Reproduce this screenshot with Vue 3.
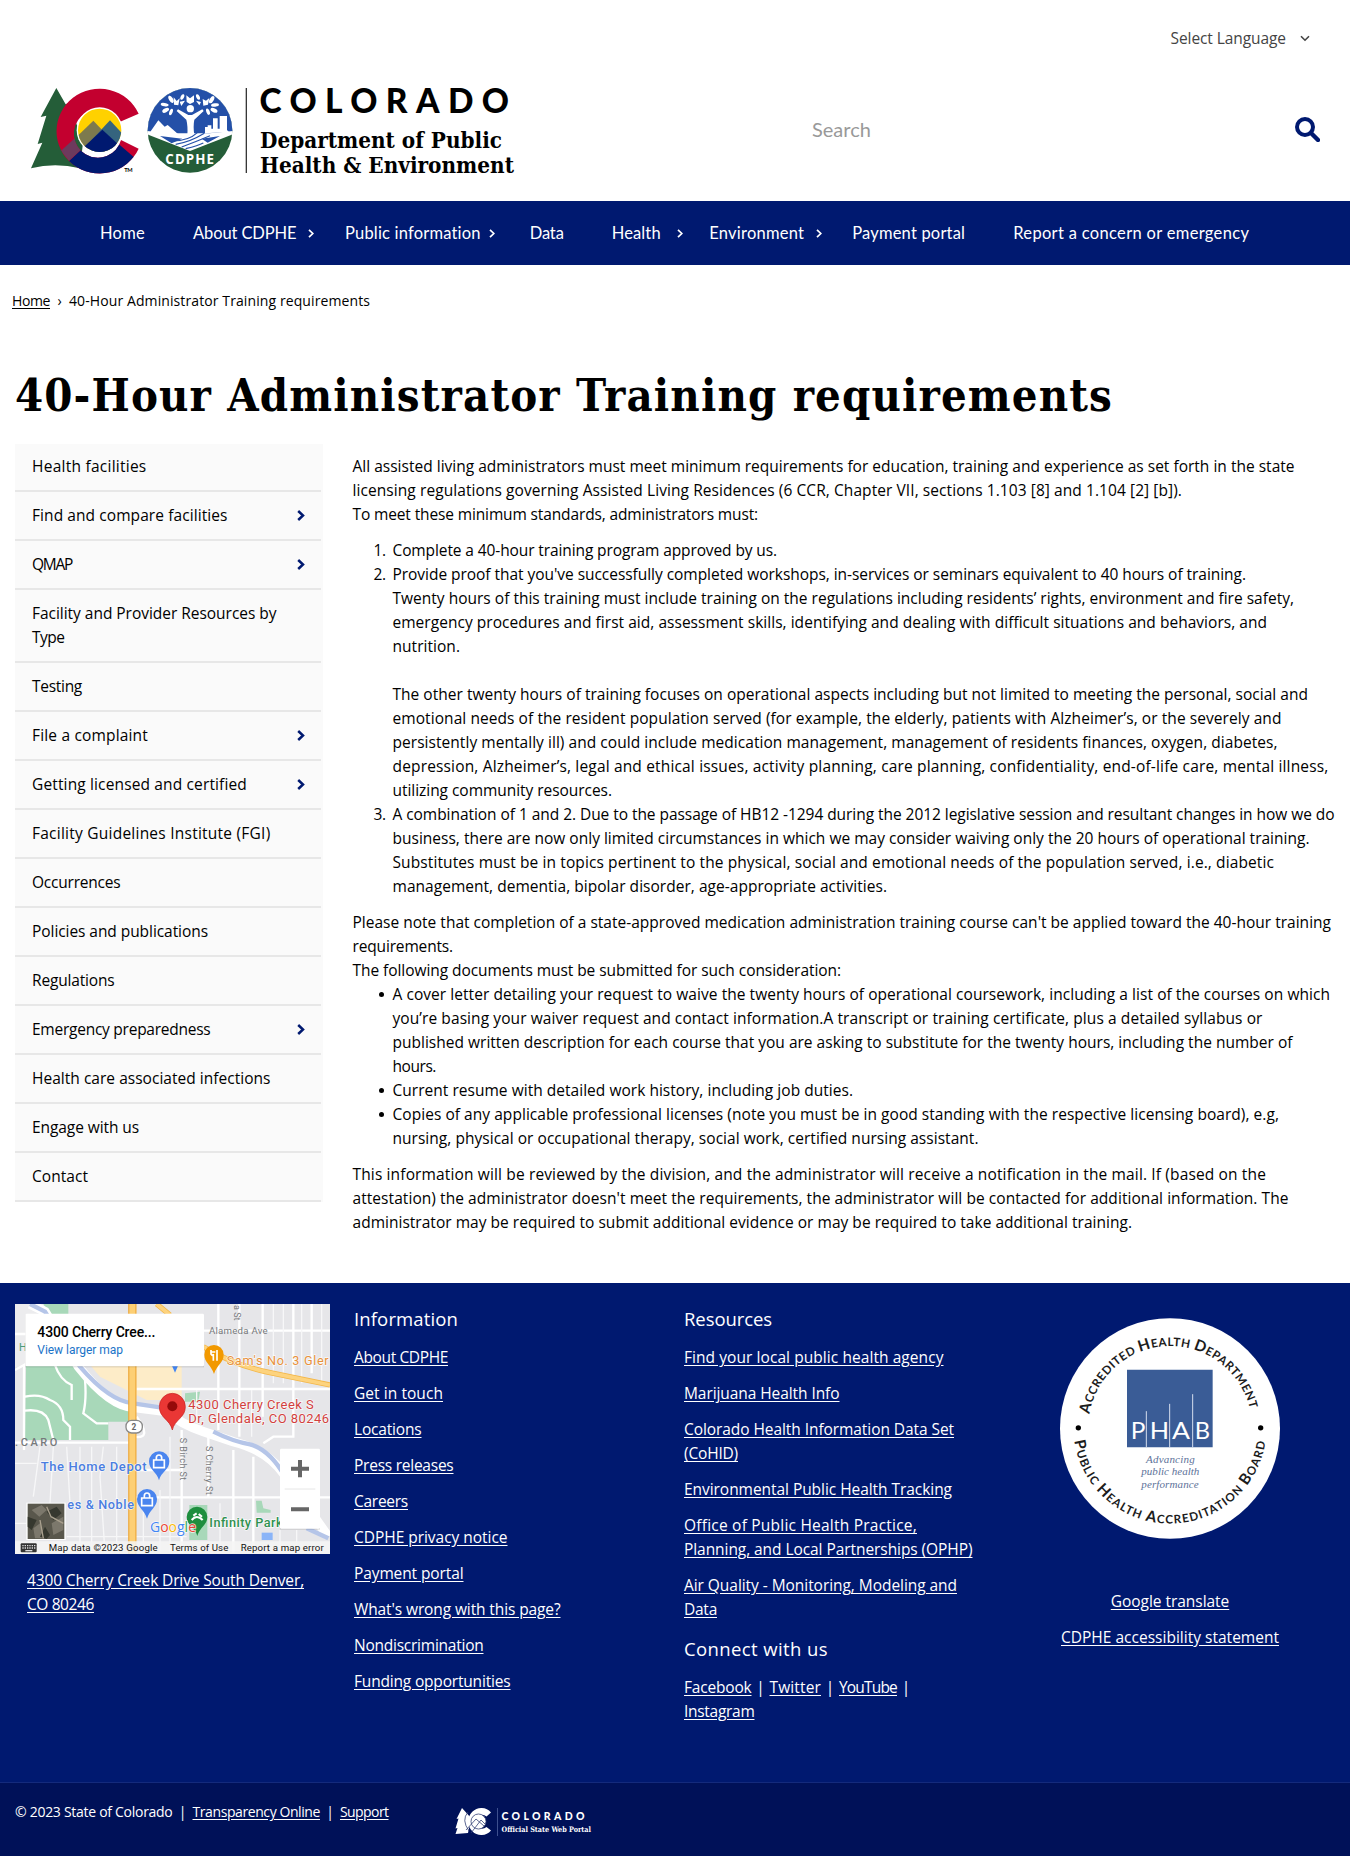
<script setup>
// Stretches or tightens a text run to a set width through its letter spacing.
const vFit = {
  mounted(el, { value }) {
    const gap = (value - el.getBoundingClientRect().width) / el.textContent.length
    el.style.letterSpacing = gap.toFixed(4) + 'px'
  }
}

const nav = [
  { text: 'Home', w: 45, gap: 48 },
  { text: 'About CDPHE', w: 103.5, arrow: 11, gap: 31.5 },
  { text: 'Public information', w: 136, arrow: 8.5, gap: 34.5 },
  { text: 'Data', w: 34, gap: 48 },
  { text: 'Health', w: 49, arrow: 16.5, gap: 26 },
  { text: 'Environment', w: 95, arrow: 12, gap: 30 },
  { text: 'Payment portal', w: 113, gap: 48 },
  { text: 'Report a concern or emergency', w: 236, gap: 0 }
]

const side = [
  { lines: [['Health facilities', 114.5]] },
  { lines: [['Find and compare facilities', 195.5]], arrow: true },
  { lines: [['QMAP', 40]], arrow: true },
  { lines: [['Facility and Provider Resources by', 244.5], ['Type', 32.5]] },
  { lines: [['Testing', 50]] },
  { lines: [['File a complaint', 116]], arrow: true },
  { lines: [['Getting licensed and certified', 215]], arrow: true },
  { lines: [['Facility Guidelines Institute (FGI)', 238.5]] },
  { lines: [['Occurrences', 88.5]] },
  { lines: [['Policies and publications', 176]] },
  { lines: [['Regulations', 82.5]] },
  { lines: [['Emergency preparedness', 178.5]], arrow: true },
  { lines: [['Health care associated infections', 238.5]] },
  { lines: [['Engage with us', 107]] },
  { lines: [['Contact', 56]] }
]

const intro = [
  ['All assisted living administrators must meet minimum requirements for education, training and experience as set forth in the state', 942],
  ['licensing regulations governing Assisted Living Residences (6 CCR, Chapter VII, sections 1.103 [8] and 1.104 [2] [b]).', 829.5],
  ['To meet these minimum standards, administrators must:', 405.5]
]

const steps = [
  [['Complete a 40-hour training program approved by us.', 384.5]],
  [
    ["Provide proof that you've successfully completed workshops, in-services or seminars equivalent to 40 hours of training.", 853.5],
    ['Twenty hours of this training must include training on the regulations including residents’ rights, environment and fire safety,', 901.5],
    ['emergency procedures and first aid, assessment skills, identifying and dealing with difficult situations and behaviors, and', 874.5],
    ['nutrition.', 67.5],
    null,
    ['The other twenty hours of training focuses on operational aspects including but not limited to meeting the personal, social and', 915.5],
    ['emotional needs of the resident population served (for example, the elderly, patients with Alzheimer’s, or the severely and', 889],
    ['persistently mentally ill) and could include medication management, management of residents finances, oxygen, diabetes,', 885],
    ['depression, Alzheimer’s, legal and ethical issues, activity planning, care planning, confidentiality, end-of-life care, mental illness,', 936],
    ['utilizing community resources.', 219.5]
  ],
  [
    ['A combination of 1 and 2. Due to the passage of HB12 -1294 during the 2012 legislative session and resultant changes in how we do', 942],
    ['business, there are now only limited circumstances in which we may consider waiving only the 20 hours of operational training.', 917],
    ['Substitutes must be in topics pertinent to the physical, social and emotional needs of the population served, i.e., diabetic', 881.5],
    ['management, dementia, bipolar disorder, age-appropriate activities.', 494.5]
  ]
]

const note = [
  ["Please note that completion of a state-approved medication administration training course can't be applied toward the 40-hour training", 978.5],
  ['requirements.', 100.5],
  ['The following documents must be submitted for such consideration:', 488.5]
]

const docs = [
  [
    ['A cover letter detailing your request to waive the twenty hours of operational coursework, including a list of the courses on which', 937.5],
    ['you’re basing your waiver request and contact information.A transcript or training certificate, plus a detailed syllabus or', 870],
    ['published written description for each course that you are asking to substitute for the twenty hours, including the number of', 900],
    ['hours.', 43.5]
  ],
  [['Current resume with detailed work history, including job duties.', 460.5]],
  [
    ['Copies of any applicable professional licenses (note you must be in good standing with the respective licensing board), e.g,', 886.5],
    ['nursing, physical or occupational therapy, social work, certified nursing assistant.', 586]
  ]
]

const closing = [
  ['This information will be reviewed by the division, and the administrator will receive a notification in the mail. If (based on the', 913.5],
  ["attestation) the administrator doesn't meet the requirements, the administrator will be contacted for additional information. The", 936],
  ['administrator may be required to submit additional evidence or may be required to take additional training.', 779.5]
]

const information = [
  [['About CDPHE', 94]],
  [['Get in touch', 89]],
  [['Locations', 67.5]],
  [['Press releases', 99.5]],
  [['Careers', 54]],
  [['CDPHE privacy notice', 153.5]],
  [['Payment portal', 109.5]],
  [["What's wrong with this page?", 206.5]],
  [['Nondiscrimination', 129.5]],
  [['Funding opportunities', 156.5]]
]

const resources = [
  [['Find your local public health agency', 259.5]],
  [['Marijuana Health Info', 155.5]],
  [['Colorado Health Information Data Set', 270], ['(CoHID)', 54]],
  [['Environmental Public Health Tracking', 268]],
  [['Office of Public Health Practice,', 233], ['Planning, and Local Partnerships (OPHP)', 288.5]],
  [['Air Quality - Monitoring, Modeling and', 273], ['Data', 33]]
]
</script>

<template>
  <div class="page">
    <header>
      <div class="language">
        <span v-fit="115.5">Select Language</span>
        <svg width="10" height="7" viewBox="0 0 10 7"><path d="M1 1.2 5 5.2 9 1.2" fill="none" stroke="#444" stroke-width="1.6" /></svg>
      </div>
      <div class="brand">
        <svg class="logo" width="490" height="94" viewBox="28 84 490 94">
          <defs>
            <clipPath id="cshape"><path d="M341 101A129 127 0 1 0 341 206L288 180A72 72 0 1 1 282 127Z" /></clipPath>
            <clipPath id="cdot"><circle cx="224" cy="151" r="65" /></clipPath>
            <clipPath id="seal"><circle cx="495" cy="151" r="127" /></clipPath>
          </defs>
          <g transform="translate(25 80) scale(.33333)">
            <path d="M94 24 47 111 64 107 38 192 52 188 18 265Q90 247 165 265L175 180 128 70 122 73Z" fill="#245d38" />
            <path d="M341 101A129 127 0 1 0 341 206L288 180A72 72 0 1 1 282 127Z" fill="#c3002f" />
            <g clip-path="url(#cshape)">
              <path d="M130 245 232 150 360 260V290H120Z" fill="#001970" />
              <path d="M108 212 206 123 232 150 132 242Z" fill="#6d3a5d" />
            </g>
            <circle cx="224" cy="151" r="69" fill="#fff" />
            <g clip-path="url(#cdot)">
              <path d="M155 80H295V220H155Z" fill="#ffd100" />
              <path d="M140 185 205 122 260 180V220H140Z" fill="#7d7a4e" />
              <path d="M200 180 255 121 310 180V220H200Z" fill="#35647e" />
              <path d="M135 240 232 149 320 230Z" fill="#001970" />
            </g>
            <text x="298" y="276" font-size="17" textLength="25" class="lato b">TM</text>
            <g clip-path="url(#seal)">
              <path d="M365 20H625V280H365Z" fill="#245d38" />
              <path d="M365 20H625V162L495 213 365 162Z" fill="#fff" />
              <path d="M365 20H625V153L553 160 440 160 365 153Z" fill="#2450a8" />
              <path d="M405 168 472 176 440 190ZM585 168 530 176 548 188Z" fill="#2450a8" />
              <path d="M376 155 400 121 419 140 428 135 459 162 430 166ZM540 160V141H548V136H559V146H564V115H578V146H584V108H606V150L612 156Z" fill="#fff" />
              <path d="M487 166Q489 138 484 119L455 93 459 88 490 105H501L532 88 536 93 508 119Q504 138 508 166Z" fill="#fff" />
              <circle cx="496" cy="86" r="11" fill="#fff" />
              <g fill="#fff">
                <ellipse cx="419" cy="74" rx="12" ry="5" transform="rotate(10 419 74)" />
                <ellipse cx="422" cy="91" rx="11" ry="6" transform="rotate(-28 422 91)" />
                <ellipse cx="438" cy="96" rx="5" ry="10" transform="rotate(20 438 96)" />
                <ellipse cx="438" cy="58" rx="6" ry="12" transform="rotate(-30 438 58)" />
                <path d="M446 52 455 63 464 55 460 76 447 74ZM464 65 480 62 469 78Z" />
                <path d="M485 66 484 46 495 55 507 46 507 66 495 72Z" />
                <path d="M513 62 528 66 523 76ZM533 57 543 62 553 54 549 74 535 77Z" />
                <ellipse cx="560" cy="59" rx="6" ry="12" transform="rotate(30 560 59)" />
                <ellipse cx="570" cy="75" rx="12" ry="5" transform="rotate(-8 570 75)" />
                <ellipse cx="567" cy="91" rx="11" ry="6" transform="rotate(25 567 91)" />
                <ellipse cx="549" cy="95" rx="5" ry="10" transform="rotate(-20 549 95)" />
                <ellipse cx="472" cy="51" rx="5" ry="9" transform="rotate(25 472 51)" />
                <ellipse cx="519" cy="51" rx="5" ry="9" transform="rotate(-25 519 51)" />
              </g>
              <g fill="none" stroke="#2450a8" stroke-width="3.5">
                <path d="M452 193Q494 187 538 160M470 201Q512 185 555 167M482 206Q520 197 535 189M438 183Q490 184 517 158" />
              </g>
            </g>
            <text x="421" y="251" font-size="40" textLength="146" fill="#fff" class="open b">CDPHE</text>
          </g>
          <path d="M246.3 88V173" stroke="#222" stroke-width="1.2" />
          <text x="259.5" y="112.500" font-size="33.5" textLength="249.500" class="lato black">COLORADO</text>
          <text x="260" y="147.8" font-size="21.500" textLength="242" lengthAdjust="spacingAndGlyphs" class="slab">Department of Public</text>
          <text x="260" y="172.8" font-size="21.500" textLength="254" lengthAdjust="spacingAndGlyphs" class="slab">Health &amp; Environment</text>
        </svg>
        <div class="search">
          <input placeholder="Search" />
          <svg width="25" height="25" viewBox="0 0 25 25"><circle cx="10" cy="10" r="8" fill="none" stroke="#001970" stroke-width="4" /><path d="M16 16 23 23" stroke="#001970" stroke-width="4.4" stroke-linecap="round" /></svg>
        </div>
      </div>
    </header>

    <nav>
      <a v-for="n in nav" :key="n.text" :style="{ marginRight: n.gap + 'px' }">
        <span v-fit="n.w">{{ n.text }}</span>
        <svg v-if="n.arrow" :style="{ marginLeft: n.arrow + 'px' }" width="6" height="9" viewBox="0 0 6 9"><path d="M1 .8 4.8 4.5 1 8.2" fill="none" stroke="#fff" stroke-width="1.7" /></svg>
      </a>
    </nav>

    <div class="crumbs">
      <u v-fit="38">Home</u><i>›</i><span v-fit="301">40-Hour Administrator Training requirements</span>
    </div>
    <h1><span v-fit="1098">40-Hour Administrator Training requirements</span></h1>

    <div class="columns">
      <aside>
        <div v-for="s in side" :key="s.lines[0][0]" class="item">
          <div><span v-for="l in s.lines" :key="l[0]" v-fit="l[1]" class="line">{{ l[0] }}</span></div>
          <svg v-if="s.arrow" width="8" height="11" viewBox="0 0 8 11"><path d="M1.2 1 6 5.5 1.2 10" fill="none" stroke="#001970" stroke-width="2.5" /></svg>
        </div>
      </aside>
      <main>
        <p><span v-for="l in intro" :key="l[0]" v-fit="l[1]" class="line">{{ l[0] }}</span></p>
        <ol>
          <li v-for="(step, i) in steps" :key="i">
            <b class="mark">{{ i + 1 }}.</b>
            <template v-for="(l, k) in step" :key="k">
              <span v-if="l" v-fit="l[1]" class="line">{{ l[0] }}</span>
              <br v-else />
            </template>
          </li>
        </ol>
        <p><span v-for="l in note" :key="l[0]" v-fit="l[1]" class="line">{{ l[0] }}</span></p>
        <ul>
          <li v-for="(doc, i) in docs" :key="i">
            <b class="dot"></b>
            <span v-for="l in doc" :key="l[0]" v-fit="l[1]" class="line">{{ l[0] }}</span>
          </li>
        </ul>
        <p><span v-for="l in closing" :key="l[0]" v-fit="l[1]" class="line">{{ l[0] }}</span></p>
      </main>
    </div>

    <footer>
      <section class="place">
        <svg width="315" height="250" viewBox="45 42 945 750">
          <path d="M45 42H990V792H45Z" fill="#e6e6e9" />
          <path d="M45 42H130L200 60V230H45Z" fill="#ececee" />
          <path d="M130 42H205V75H150ZM78 225H235L330 325 395 345V395H325V450H75Z" fill="#a8d8b9" />
          <path d="M270 225H545V330H440L300 260Z" fill="#fdecc8" />
          <path d="M555 310 600 305 595 335 555 335ZM768 632H785L790 655 812 660V668H770Z" fill="#a8d8b9" />
          <path d="M568 645H622V750H568Z" fill="#a8d8b9" />
          <g fill="none" stroke="#fff" stroke-width="7">
            <path d="M45 132H78M45 458H390M45 240 72 225V480M410 297H990M600 122H990M75 320Q120 310 150 330 190 345 190 390L210 410V450M75 362Q130 355 145 390L160 450M165 225Q180 270 215 285V330M255 270Q260 330 250 370L290 400H325M400 622H990M410 540H540M545 420V790M655 42V420M625 430V622M718 42V440M788 42V380M880 42V440H820L790 460M935 42V250M700 480V790M760 500V790M410 380Q460 450 400 440" />
          </g>
          <g fill="none" stroke="#f7f7f8" stroke-width="4">
            <path d="M120 470 100 620M160 470 150 640M200 470 210 640M240 470V790M275 470V790M310 470 300 560 315 790M350 470V790M820 42V280M850 42V280M905 42V280M965 42V280M430 640V790M480 600V790M510 440V790M660 640V790M840 720V790M890 720V790M590 300V400M755 300V440M45 520H110M45 700H80M200 740H560" />
          </g>
          <path d="M90 42 135 65 235 230Q330 350 400 352L500 365Q540 400 610 425L700 455Q800 480 850 550L985 740" fill="none" stroke="#fff" stroke-width="28" />
          <path d="M90 42 135 65 240 230Q330 335 400 340L500 355M640 425Q700 455 750 463 810 480 855 560M920 715 985 745" fill="none" stroke="#b5c5e8" stroke-width="13" />
          <path d="M397 42V792" stroke="#eea83a" stroke-width="25" /><path d="M397 42V792" stroke="#fdcf74" stroke-width="18" />
          <path d="M470 42 510 75M610 170Q700 225 810 248L990 285" fill="none" stroke="#f3b648" stroke-width="16" /><path d="M470 42 510 75M610 170Q700 225 810 248L990 285" fill="none" stroke="#fdd37e" stroke-width="11" />
          <path d="M515 225H535L525 248Z" fill="#4285f4" />
          <path d="M785 728H818V750H785Z" fill="#8ab4f8" />
          <rect x="378" y="391" width="49" height="38" rx="17" fill="#fff" stroke="#888" stroke-width="4" />
          <g class="roboto">
            <text x="402" y="419" font-size="25" text-anchor="middle" fill="#666" class="b">2</text>
            <text x="57" y="184" font-size="32" fill="#4b9a7c">H</text>
            <g fill="#77797c">
              <text x="627" y="133" font-size="29" textLength="176">Alameda Ave</text>
              <text transform="translate(703 45) rotate(90)" font-size="27">a St</text>
              <text transform="translate(541 443) rotate(90)" font-size="27" textLength="128">S Birch St</text>
              <text transform="translate(617 468) rotate(90)" font-size="27" textLength="146">S Cherry St</text>
              <text x="45" y="467" font-size="33" textLength="127" class="m">.CARO</text>
            </g>
            <g class="halo">
              <text x="680" y="224" font-size="38" textLength="306" fill="#e8913a">Sam's No. 3 Gler</text>
              <text x="565" y="357" font-size="39" textLength="376" fill="#d23f3d">4300 Cherry Creek S</text>
              <text x="565" y="400" font-size="39" textLength="422" fill="#d23f3d">Dr, Glendale, CO 80246</text>
              <text x="122" y="543" font-size="39" textLength="318" fill="#4a7de0" class="m">The Home Depot</text>
              <text x="202" y="657" font-size="38" textLength="200" fill="#4a7de0" class="m">es &amp; Noble</text>
              <text x="628" y="711" font-size="38" textLength="220" fill="#2f9150" class="m">Infinity Park</text>
            </g>
          </g>
          <g>
            <path d="M642 252C634 225 613 218 613 194A29 29 0 0 1 671 194C671 218 650 225 642 252Z" fill="#f29900" />
            <path d="M633 180V192Q638 200 640 192V212M633 186H646M651 180V212" fill="none" stroke="#fff" stroke-width="5" />
            <path d="M477 571C470 545 447 540 447 514A30 30 0 0 1 508 514C508 540 484 545 477 571Z" fill="#4a85ef" />
            <path d="M461 510H493V533H461ZM469 510V503A8 8 0 0 1 485 503V510" fill="none" stroke="#fff" stroke-width="5" />
            <path d="M441 686C434 660 411 652 411 627A30 30 0 0 1 471 627C471 652 448 660 441 686Z" fill="#4a85ef" />
            <path d="M425 624H457V647H425ZM433 624V617A8 8 0 0 1 449 617V624" fill="none" stroke="#fff" stroke-width="5" />
            <path d="M592 738C585 712 560 705 560 681A31 31 0 0 1 622 681C622 705 599 712 592 738Z" fill="#1e8e3e" />
            <path d="M575 690Q590 672 608 690M580 677 590 670M596 672 606 680" fill="none" stroke="#fff" stroke-width="6" />
            <path d="M517 420C510 388 478 384 478 350A39 40 0 0 1 556 350C556 384 524 388 517 420Z" fill="#ea3735" stroke="#c5221f" stroke-width="2" />
            <circle cx="517" cy="349" r="15" fill="#960a0a" />
          </g>
          <text x="450" y="726" font-size="45" textLength="138" lengthAdjust="spacingAndGlyphs" class="open halo"><tspan fill="#4285f4">G</tspan><tspan fill="#ea4335">o</tspan><tspan fill="#fbbc04">o</tspan><tspan fill="#4285f4">g</tspan><tspan fill="#34a853">l</tspan><tspan fill="#ea4335">e</tspan></text>
          <rect x="79" y="638" width="118" height="112" fill="#fff" /><rect x="83" y="641" width="110" height="106" fill="#59574c" />
          <path d="M95 660 125 645 140 660 118 680ZM155 700 190 680V720L160 735ZM100 715 120 700 135 745H105Z" fill="#7c786c" />
          <path d="M83 680 110 690 95 720 83 710ZM140 665 170 650 185 670 160 690ZM135 710 150 735 140 747 120 740Z" fill="#36382f" />
          <path d="M120 690 130 745M140 650 153 680 190 700" stroke="#a9a08e" stroke-width="4" fill="none" />
          <path d="M45 754H990V792H45Z" fill="#f5f5f5" fill-opacity=".85" />
          <rect x="62" y="760" width="48" height="27" rx="3" fill="#333" />
          <path d="M67 767H106M67 774H106" stroke="#ddd" stroke-width="4" stroke-dasharray="4 3" /><path d="M76 782H97" stroke="#ddd" stroke-width="4" />
          <g class="roboto" fill="#111" font-size="29">
            <text x="146" y="782" textLength="327">Map data ©2023 Google</text>
            <text x="510" y="782" textLength="175">Terms of Use</text>
            <text x="722" y="782" textLength="249">Report a map error</text>
          </g>
          <rect x="76" y="74" width="536" height="158" fill="#0002" /><rect x="76" y="71" width="536" height="158" rx="4" fill="#fff" />
          <g class="roboto">
            <text x="112" y="140" font-size="42" textLength="354" class="m">4300 Cherry Cree...</text>
            <text x="112" y="191" font-size="36" textLength="257" fill="#1a73c8">View larger map</text>
          </g>
          <rect x="840" y="479" width="120" height="240" fill="#0002" /><rect x="840" y="476" width="120" height="240" rx="4" fill="#fff" />
          <path d="M854 597H946" stroke="#e6e6e6" stroke-width="3" />
          <path d="M873 536H927M900 510V562M873 658H927" stroke="#666" stroke-width="12" />
        </svg>
        <a class="address"><span v-fit="277" class="line">4300 Cherry Creek Drive South Denver,</span><span v-fit="67" class="line">CO 80246</span></a>
      </section>

      <section class="info">
        <h2><span v-fit="104">Information</span></h2>
        <a v-for="a in information" :key="a[0][0]"><span v-for="l in a" :key="l[0]" v-fit="l[1]" class="line">{{ l[0] }}</span></a>
      </section>

      <section class="res">
        <h2><span v-fit="88">Resources</span></h2>
        <a v-for="a in resources" :key="a[0][0]"><span v-for="l in a" :key="l[0]" v-fit="l[1]" class="line">{{ l[0] }}</span></a>
        <h2 class="connect"><span v-fit="144">Connect with us</span></h2>
        <div class="social"><u v-fit="67.5">Facebook</u><i>|</i><u v-fit="51.5">Twitter</u><i>|</i><u v-fit="58">YouTube</u><i>|</i></div>
        <div class="social"><u v-fit="70.5">Instagram</u></div>
      </section>

      <section class="badge">
        <svg width="220" height="221" viewBox="60 55 660 662">
          <defs>
            <path id="top" d="M148 343A246 246 0 0 1 634 350" />
            <path id="bottom" d="M103 423A290 290 0 0 0 677 423" />
          </defs>
          <ellipse cx="390" cy="386" rx="330" ry="331" fill="#fff" />
          <g class="lato b" fill="#1c1c1c" font-size="35">
            <text><textPath href="#top" textLength="672"><tspan font-size="46">A</tspan>CCREDITED <tspan font-size="46">H</tspan>EALTH <tspan font-size="46">D</tspan>EPARTMENT</textPath></text>
            <text><textPath href="#bottom" textLength="824"><tspan font-size="46">P</tspan>UBLIC <tspan font-size="46">H</tspan>EALTH <tspan font-size="46">A</tspan>CCREDITATION <tspan font-size="46">B</tspan>OARD</textPath></text>
          </g>
          <circle cx="115" cy="384" r="8" /><circle cx="662" cy="384" r="8" />
          <path d="M261 210H518V442H261Z" fill="#3a5c96" />
          <path d="M319 334V442M389 312V442M458 283V442" stroke="#d5deee" stroke-width="3" />
          <g class="lato" fill="#fff" font-size="70"><text x="272" y="419" textLength="44" lengthAdjust="spacingAndGlyphs">P</text><text x="329" y="419" textLength="58" lengthAdjust="spacingAndGlyphs">H</text><text x="396" y="419" textLength="54" lengthAdjust="spacingAndGlyphs">A</text><text x="464" y="419" textLength="46" lengthAdjust="spacingAndGlyphs">B</text></g>
          <g class="serif" fill="#5d7299" font-size="33">
            <text x="318" y="489" textLength="146">Advancing</text><text x="304" y="527" textLength="174">public health</text><text x="304" y="566" textLength="172">performance</text>
          </g>
        </svg>
        <a class="first"><span v-fit="118.5" class="line">Google translate</span></a>
        <a><span v-fit="218" class="line">CDPHE accessibility statement</span></a>
      </section>
    </footer>

    <div class="legal">
      <span v-fit="157.5">© 2023 State of Colorado</span><i>|</i><u v-fit="127.5">Transparency Online</u><i>|</i><u v-fit="48.5">Support</u>
      <svg width="150" height="32" viewBox="452 1806 150 32">
        <path d="M461 1808 455.500 1819 457.500 1818.500 454.500 1828.500 456.500 1828 454.500 1834 467 1833 470 1818Z" fill="#fff" />
        <path d="M490 1812.500A13 13.500 0 1 0 490 1830.500L485.500 1827A7 7 0 1 1 485.500 1816.500Z" fill="#fff" />
        <circle cx="477.500" cy="1821.500" r="7.500" fill="#fff" stroke="#334176" stroke-width=".8" />
        <path d="M465 1830 475 1819 483 1826M470 1833 480 1820 484 1824M467 1812Q460 1820 468 1831" fill="none" stroke="#334176" stroke-width=".8" />
        <path d="M496.500 1808V1836" stroke="#4d5f9c" stroke-width=".8" />
        <text x="500.500" y="1819.500" font-size="10.500" textLength="83" fill="#fff" class="lato black">COLORADO</text>
        <text x="500.500" y="1831.700" font-size="7.500" textLength="89.500" lengthAdjust="spacingAndGlyphs" fill="#fff" class="slab">Official State Web Portal</text>
      </svg>
    </div>
  </div>
</template>

<style>
body { margin: 0; background: #fff; }
</style>

<style scoped>
.page { width: 1350px; height: 1856px; overflow: hidden; display: flex; flex-direction: column; font: 15.5px/24px "Open Sans", "Noto Sans", sans-serif; color: #000; background: #fff; }
.page > * { flex: none; }
svg { flex: none; display: block; }
i { font-style: normal; }
h1, h2, p, ol, ul { margin: 0; padding: 0; font-weight: 400; }
.line { display: block; width: max-content; white-space: nowrap; }
.lato { font-family: Lato, sans-serif; }
.open { font-family: "Open Sans", sans-serif; }
.roboto { font-family: Roboto, sans-serif; }
.serif { font-family: "Liberation Serif", serif; font-style: italic; }
.slab { font-family: "DejaVu Serif Condensed", "DejaVu Serif", serif; font-stretch: condensed; font-weight: 700; }
.m { font-weight: 500; }
.b { font-weight: 700; }
.black { font-weight: 900; }
.halo { paint-order: stroke; stroke: #fff; stroke-width: 4px; stroke-opacity: .8; }

header { height: 201px; display: flex; flex-direction: column; }
.language { height: 76px; display: flex; align-items: center; justify-content: flex-end; gap: 14px; padding-right: 40px; color: #444; white-space: nowrap; }
.brand { display: flex; justify-content: space-between; padding: 8px 30px 0 28px; }
.logo { overflow: visible; }
.search { display: flex; align-items: center; width: 508px; height: 91px; gap: 10px; }
.search input { flex: 1; border: 0; outline: 0; padding: 0 0 2px; background: none; font: 20px Lato, sans-serif; }
.search input::placeholder { color: #999; }

nav { height: 64px; display: flex; align-items: center; padding-left: 100px; box-sizing: border-box; background: #001970; color: #fff; font: 16.5px/24px Lato, sans-serif; white-space: nowrap; }
nav a { display: flex; align-items: center; }

.crumbs { display: flex; align-items: center; height: 24px; margin-top: 24px; padding-left: 12px; font-size: 14px; white-space: nowrap; }
.crumbs i { width: 19px; text-align: center; }
h1 { height: 60px; margin: 53px 0 18px 15px; font: 700 45px/60px "DejaVu Serif Condensed", "DejaVu Serif", serif; font-stretch: condensed; white-space: nowrap; }

.columns { display: flex; align-items: flex-start; height: 839px; }
aside { width: 308px; margin-left: 15px; background: #fafafa; }
.item { display: flex; align-items: center; justify-content: space-between; width: 306px; padding: 11.5px 16.5px 11.5px 17px; box-sizing: border-box; border-bottom: 2px solid #e7e7e7; }
.item:first-child { padding-top: 10px; }
main { margin: 10px 0 0 29.5px; }
main ol { margin: 12px 0; }
main ul { margin-bottom: 12px; }
li { list-style: none; padding-left: 40px; position: relative; }
.mark { position: absolute; left: 21px; font-weight: 400; letter-spacing: -.3px; }
.dot { position: absolute; left: 26.5px; top: 10px; width: 5px; height: 5px; border-radius: 50%; background: #000; }

footer { display: flex; height: 499px; box-sizing: border-box; padding-top: 21px; background: #001970; color: #fff; }
footer a { display: block; margin-bottom: 12px; }
footer a .line, u { text-decoration: underline; text-underline-offset: 2px; }
.place { width: 339px; padding-left: 15px; }
.address { margin: 14px 0 0 12px; }
.info { width: 330px; }
.res { width: 336px; }
h2 { height: 29px; margin-bottom: 12px; font-size: 18.5px; line-height: 29px; white-space: nowrap; }
.connect { margin: 13px 0 12px; }
.social { display: flex; white-space: nowrap; }
.social i { width: 18px; text-align: center; }
.badge { width: 300px; display: flex; flex-direction: column; align-items: center; padding-top: 13.5px; }
.badge .first { margin-top: 50px; }

.legal { display: flex; align-items: flex-start; height: 74px; box-sizing: border-box; padding: 17px 0 0 15px; background: #001158; border-top: 1px solid #142a7c; color: #fff; font-size: 14px; white-space: nowrap; }
.legal i { width: 20px; text-align: center; }
.legal svg { margin: 6px 0 0 64px; }
</style>
